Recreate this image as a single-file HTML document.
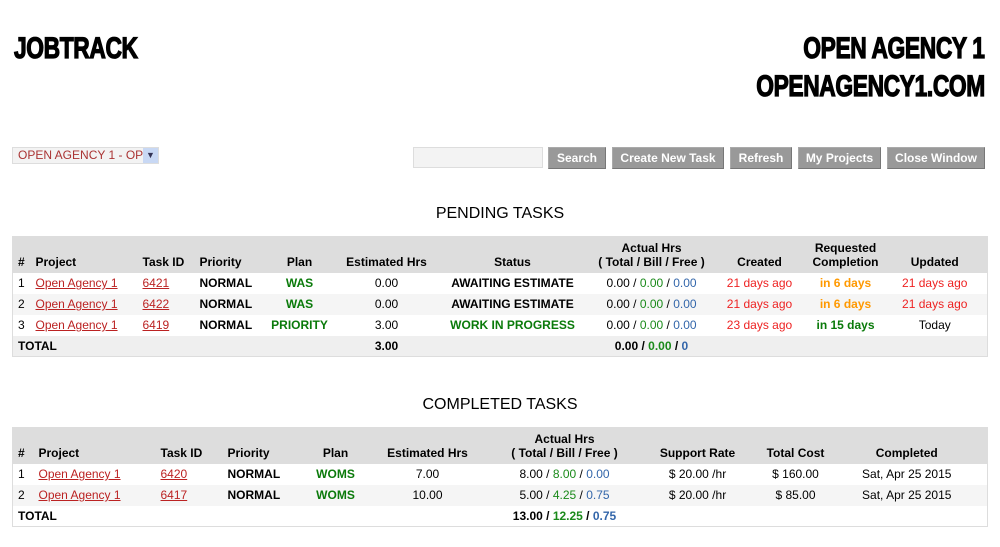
<!DOCTYPE html>
<html><head><meta charset="utf-8"><style>
*{margin:0;padding:0;box-sizing:border-box}
body{width:1000px;height:547px;background:#fff;font-family:"Liberation Sans",Arial,sans-serif;font-size:12px;color:#000;position:relative;overflow:hidden}
.big{position:absolute;font-weight:bold;font-size:30px;line-height:30px;letter-spacing:-0.5px;white-space:nowrap;-webkit-text-stroke:1.3px #000}
.l{left:14px;transform-origin:left top;transform:scaleX(0.76)}
.r{right:15px;transform-origin:right top;transform:scaleX(0.76)}
.sel{position:absolute;left:12px;top:147px;width:147px;height:17px;border:1px solid #ddd;background:#f3f3f3;color:#a33;font-size:12px;line-height:15px;padding-left:5px;overflow:hidden;white-space:nowrap}
.sel b{position:absolute;right:0;top:0;width:15px;height:15px;background:#c8d8f4;color:#335;font-size:9px;text-align:center;line-height:15px}
.inp{position:absolute;left:413px;top:147px;width:130px;height:21px;border:1px solid #ddd;background:#f3f3f3}
.btn{position:absolute;top:147px;height:22px;background:#999;color:#fff;font-weight:bold;font-size:12px;text-align:center;line-height:21px;border:1px solid #aaa;border-right-color:#777;border-bottom-color:#777}
.title{position:absolute;left:0;width:1000px;text-align:center;font-size:16px}
table{position:absolute;left:12px;width:975px;border-collapse:collapse;border:1px solid #ddd;table-layout:fixed}
td,th{height:21px;padding:0 0 0 5px;white-space:nowrap;overflow:hidden}
th{background:#ddd;font-weight:bold;vertical-align:bottom;padding-bottom:4px;line-height:14px}
tr.h th{height:36px}
.c{text-align:center;padding-left:0;padding-right:0}
.alt td{background:#f5f5f5}
.tot td{background:#efefef;font-weight:bold}
.tw td{background:#fff;font-weight:bold}
a{color:#b22;text-decoration:underline}
.g{color:#1a8a1a}.gb{color:#0a7a0a;font-weight:bold}.bl{color:#36a}.rd{color:#e22}.or{color:#f90;font-weight:bold}
</style></head><body>
<div class="big l" style="top:34px">JOBTRACK</div>
<div class="big r" style="top:34px">OPEN AGENCY 1</div>
<div class="big r" style="top:72px">OPENAGENCY1.COM</div>
<div class="sel">OPEN AGENCY 1 - OPEN AGE<b>&#9660;</b></div>
<div class="inp"></div>
<div class="btn" style="left:548px;width:58px">Search</div>
<div class="btn" style="left:612px;width:112px">Create New Task</div>
<div class="btn" style="left:730px;width:62px">Refresh</div>
<div class="btn" style="left:798px;width:83px">My Projects</div>
<div class="btn" style="left:887px;width:98px">Close Window</div>
<div class="title" style="top:205px">PENDING TASKS</div>
<table style="top:236px">
<colgroup><col style="width:18px"><col style="width:107px"><col style="width:57px"><col style="width:64px"><col style="width:82px"><col style="width:92px"><col style="width:160px"><col style="width:118px"><col style="width:98px"><col style="width:74px"><col style="width:105px"></colgroup>
<tr class="h"><th style="text-align:left">#</th><th style="text-align:left">Project</th><th style="text-align:left">Task ID</th><th style="text-align:left">Priority</th><th class="c">Plan</th><th class="c">Estimated Hrs</th><th class="c">Status</th><th class="c">Actual Hrs<br>( Total / Bill / Free )</th><th class="c">Created</th><th class="c">Requested<br>Completion</th><th class="c">Updated</th></tr>
<tr><td>1</td><td><a>Open Agency 1</a></td><td><a>6421</a></td><td><b>NORMAL</b></td><td class="c gb">WAS</td><td class="c">0.00</td><td class="c"><b>AWAITING ESTIMATE</b></td><td class="c">0.00 / <span class="g">0.00</span> / <span class="bl">0.00</span></td><td class="c rd">21 days ago</td><td class="c or">in 6 days</td><td class="c rd">21 days ago</td></tr>
<tr class="alt"><td>2</td><td><a>Open Agency 1</a></td><td><a>6422</a></td><td><b>NORMAL</b></td><td class="c gb">WAS</td><td class="c">0.00</td><td class="c"><b>AWAITING ESTIMATE</b></td><td class="c">0.00 / <span class="g">0.00</span> / <span class="bl">0.00</span></td><td class="c rd">21 days ago</td><td class="c or">in 6 days</td><td class="c rd">21 days ago</td></tr>
<tr><td>3</td><td><a>Open Agency 1</a></td><td><a>6419</a></td><td><b>NORMAL</b></td><td class="c gb">PRIORITY</td><td class="c">3.00</td><td class="c gb">WORK IN PROGRESS</td><td class="c">0.00 / <span class="g">0.00</span> / <span class="bl">0.00</span></td><td class="c rd">23 days ago</td><td class="c gb">in 15 days</td><td class="c">Today</td></tr>
<tr class="tot"><td colspan="5">TOTAL</td><td class="c">3.00</td><td></td><td class="c">0.00 / <span class="g">0.00</span> / <span class="bl">0</span></td><td></td><td></td><td></td></tr>
</table>
<div class="title" style="top:396px">COMPLETED TASKS</div>
<table style="top:427px">
<colgroup><col style="width:21px"><col style="width:122px"><col style="width:67px"><col style="width:72px"><col style="width:82px"><col style="width:102px"><col style="width:172px"><col style="width:94px"><col style="width:102px"><col style="width:141px"></colgroup>
<tr class="h"><th style="text-align:left">#</th><th style="text-align:left">Project</th><th style="text-align:left">Task ID</th><th style="text-align:left">Priority</th><th class="c">Plan</th><th class="c">Estimated Hrs</th><th class="c">Actual Hrs<br>( Total / Bill / Free )</th><th class="c">Support Rate</th><th class="c">Total Cost</th><th class="c" style="padding-right:20px">Completed</th></tr>
<tr><td>1</td><td><a>Open Agency 1</a></td><td><a>6420</a></td><td><b>NORMAL</b></td><td class="c gb">WOMS</td><td class="c">7.00</td><td class="c">8.00 / <span class="g">8.00</span> / <span class="bl">0.00</span></td><td class="c">$ 20.00 /hr</td><td class="c">$ 160.00</td><td class="c" style="padding-right:20px">Sat, Apr 25 2015</td></tr>
<tr class="alt"><td>2</td><td><a>Open Agency 1</a></td><td><a>6417</a></td><td><b>NORMAL</b></td><td class="c gb">WOMS</td><td class="c">10.00</td><td class="c">5.00 / <span class="g">4.25</span> / <span class="bl">0.75</span></td><td class="c">$ 20.00 /hr</td><td class="c">$ 85.00</td><td class="c" style="padding-right:20px">Sat, Apr 25 2015</td></tr>
<tr class="tw"><td colspan="6">TOTAL</td><td class="c">13.00 / <span class="g">12.25</span> / <span class="bl">0.75</span></td><td></td><td></td><td></td></tr>
</table>
</body></html>
